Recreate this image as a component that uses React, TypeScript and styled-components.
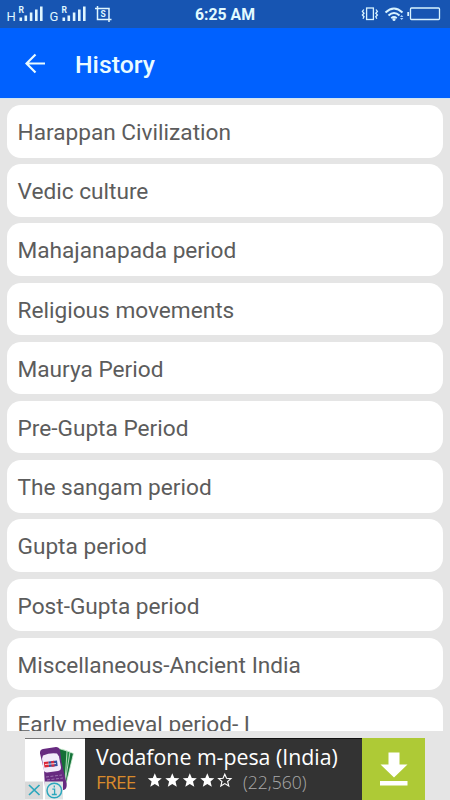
import React from 'react';
import styled, { createGlobalStyle } from 'styled-components';

const GlobalStyle = createGlobalStyle`
  * { box-sizing: border-box; }
  body { margin: 0; background: #e5e5e5; overflow: hidden; }
`;

const Screen = styled.div`
  width: 450px;
  height: 800px;
  display: flex;
  flex-direction: column;
  overflow: hidden;
  background: #e5e5e5;
  font-family: Roboto, 'Liberation Sans', sans-serif;
`;

const StatusBar = styled.header`
  height: 28px;
  flex: none;
  display: grid;
  grid-template-columns: 150px 150px 150px;
  background: #1755b2;
`;

const StatusIcons = styled.svg`
  display: block;
  width: 150px;
  height: 28px;
`;

const Clock = styled.div`
  text-align: center;
  color: #e2fbff;
  font-size: 15.8px;
  line-height: 30px;
  font-weight: 700;
`;

const AppBar = styled.div`
  height: 70px;
  flex: none;
  display: flex;
  align-items: center;
  padding: 1px 0 0 25px;
  background: #0061ff;
  color: #e9fbff;
`;

const BackButton = styled.button`
  width: 50px;
  height: 24px;
  padding: 0;
  border: 0;
  background: none;
  display: flex;
  align-items: center;
`;

const Title = styled.h1`
  margin: 0;
  padding-top: 2px;
  font-size: 24.8px;
  line-height: 30px;
  font-weight: 500;
`;

const TopicList = styled.ul`
  height: 633px;
  flex: none;
  margin: 0;
  padding: 6px 7px 0;
  display: flex;
  flex-direction: column;
  gap: 6.7px;
  list-style: none;
  overflow: hidden;
  border-top: 1px solid #cfe6f4;
`;

const Topic = styled.li`
  height: 52.5px;
  flex: none;
  padding: 0 11px 0 10.5px;
  border-radius: 14px;
  background: #fff;
  color: #5c5c5c;
  font-size: 22.65px;
  line-height: 55px;
  white-space: nowrap;
`;

const AdSlot = styled.footer`
  flex: 1;
  display: flex;
  padding: 7px 25px 0;
`;

const AdThumb = styled.div`
  width: 60px;
  height: 62px;
  border-top: 1.5px solid #777;
  background: #fff;
`;

const AdBody = styled.div`
  width: 277px;
  height: 62px;
  padding: 4px 0 0 11px;
  background: #333;
  border-top: 1px solid #111;
  font-family: 'Open Sans', 'Noto Sans', sans-serif;
`;

const AdTitle = styled.div`
  color: #fff;
  font-size: 21.3px;
  line-height: 28px;
  white-space: nowrap;
`;

const AdMeta = styled.div`
  display: flex;
  align-items: center;
  height: 22px;
`;

const Price = styled.span`
  width: 50px;
  color: #d88a2c;
  font-size: 19px;
  letter-spacing: -0.8px;
  line-height: 22px;
`;

const Stars = styled.svg`
  width: 90px;
  height: 20px;
  margin-top: -5px;
`;

const Reviews = styled.span`
  margin-left: 7px;
  color: #aaa;
  font-size: 17.6px;
  font-weight: 300;
  line-height: 22px;
`;

const Download = styled.button`
  width: 63px;
  height: 62px;
  padding: 0;
  border: 0;
  background: #aeca36;
  display: block;
`;

const topics = [
  'Harappan Civilization',
  'Vedic culture',
  'Mahajanapada period',
  'Religious movements',
  'Maurya Period',
  'Pre-Gupta Period',
  'The sangam period',
  'Gupta period',
  'Post-Gupta period',
  'Miscellaneous-Ancient India',
  'Early medieval period- I',
];

const STAR = 'M0-7.2 2-2.500 7-2.200 3.200 1.100 4.500 6.200 0 3.500-4.500 6.200-3.200 1.100-7-2.200-2-2.500Z';

function Signal({ x, label }: { x: number; label: string }) {
  return (
    <g transform={`translate(${x} 0)`} fill="#dff6ff">
      <text x="0" y="21" fontSize="13">{label}</text>
      <text x="12" y="13" fontSize="8.5" fontWeight="700">R</text>
      <path d="M13 17.5h2.6V21H13zM18 15.500h2.600V21H18zM23.300 12.500h2.600V21h-2.600zM28.500 9.500h2.600V21h-2.600zM33.500 6.500h2.600V21h-2.600z" />
    </g>
  );
}

function PhoneArt() {
  return (
    <svg width="60" height="60.5" viewBox="25 739.5 60 60.5" display="block">
      <g stroke="#d9f2dc" strokeWidth=".8">
        <path d="m66 751 7.500 3-7.500 31-8-2Z" fill="#15733a" />
        <path d="m62 749.500 8 3-5 31-8-2Z" fill="#229347" />
        <path d="m59 749 8 2.500-2 31-9-2Z" fill="#146f36" />
      </g>
      <path d="M40 754q-.5-3.500 3-4.500l13-2q3 0 4 3l1.500 12 5 21q1 6-3 7l-15 2q-3 0-3.500-5l-1-17Z" fill="#672a80" />
      <path d="m42 759 1-3q7-3 14-2l2 3 2 11q0 3-3 3.500l-11 1.500q-3 0-3.500-3Z" fill="#f2eafa" />
      <path d="m43.800 762.500 4.700-.5.500 5.500-4.500.500Z" fill="#dc2637" />
      <path d="m48.500 762 8.500-1 .7 5.500-8.700 1Z" fill="#3150a1" />
      <path d="m51 761.700 3-.4.600 5.600-3 .4Z" fill="#d12d43" />
      <path d="m45 765 11-1" stroke="#fff" strokeWidth=".8" />
      <path d="m46 777.500 16-2M47 780.500l16-2" stroke="#a886bb" strokeWidth=".8" strokeDasharray="3 1.500" />
      <path d="M25 782h18v18H25z" fill="#d9d9d9" />
      <path d="M45 782h18v18H45z" fill="#dfe4e5" />
      <path d="m29 785.500 10.500 10m0-10-10.500 10" stroke="#2ba7bd" strokeWidth="1.700" />
      <circle cx="54.300" cy="791" r="7.300" fill="none" stroke="#2ba7bd" strokeWidth="1.500" />
      <path d="M54.300 786v2M52.300 789.700h2.300v5.300M51.800 795h5" fill="none" stroke="#2ba7bd" strokeWidth="1.300" />
    </svg>
  );
}

export default function App() {
  return (
    <Screen>
      <GlobalStyle />
      <StatusBar>
        <StatusIcons viewBox="0 0 150 28">
          <Signal x={6.5} label="H" />
          <Signal x={49.5} label="G" />
          <g fill="none" stroke="#dff6ff" strokeWidth="1.500">
            <path d="M95 8.500h14V22M97.500 6v13.500h14" />
          </g>
          <text x="100.600" y="17" fontSize="8.500" fontWeight="700" fill="#dff6ff">S</text>
        </StatusIcons>
        <Clock>6:25 AM</Clock>
        <StatusIcons viewBox="300 0 150 28">
          <g fill="none" stroke="#d8f3ff" strokeWidth="1.300">
            <rect x="366.600" y="8" width="6.800" height="11.500" />
            <path d="m363.800 9.500-1.400 2 1.600 1.700-1.600 1.800 1.600 1.700-1 2M376 9.500l1.400 2-1.600 1.700 1.600 1.800-1.600 1.700 1 2" />
            <rect x="410.500" y="8" width="29" height="11.500" rx="1" />
            <path d="M408.200 12v4" strokeWidth="1.800" />
          </g>
          <g fill="none" stroke="#d8f3ff" strokeWidth="2">
            <path d="M385.500 12.500q8.500-8 17 0M388.500 15.500q5.500-5 11 0M391.300 18.200q2.700-2.400 5.400 0" />
          </g>
          <circle cx="394" cy="19.500" r="1.500" fill="#d8f3ff" />
          <path d="m400 17 1.700-2 1.700 2ZM400 18l1.700 2 1.700-2Z" fill="#a9d4ff" />
        </StatusIcons>
      </StatusBar>
      <AppBar>
        <BackButton aria-label="Back">
          <svg width="22" height="22" viewBox="0 0 22 22">
            <path d="M20 10.500H2M10.500 1.500l-9 9 9 9" fill="none" stroke="#e9fbff" strokeWidth="2.200" />
          </svg>
        </BackButton>
        <Title>History</Title>
      </AppBar>
      <TopicList>
        {topics.map((topic) => (
          <Topic key={topic}>{topic}</Topic>
        ))}
      </TopicList>
      <AdSlot>
        <AdThumb>
          <PhoneArt />
        </AdThumb>
        <AdBody>
          <AdTitle>Vodafone m-pesa (India)</AdTitle>
          <AdMeta>
            <Price>FREE</Price>
            <Stars viewBox="0 0 90 20">
              {[0, 1, 2, 3, 4].map((n) => (
                <path
                  key={n}
                  d={STAR}
                  transform={`translate(${8.8 + n * 17.5} 10.5)${n === 4 ? ' scale(.88)' : ''}`}
                  fill={n === 4 ? 'none' : '#fff'}
                  stroke={n === 4 ? '#fff' : 'none'}
                  strokeWidth="1.300"
                />
              ))}
            </Stars>
            <Reviews>(22,560)</Reviews>
          </AdMeta>
        </AdBody>
        <Download aria-label="Download">
          <svg width="63" height="62" viewBox="0 0 63 62">
            <path d="M26.500 14.500h11v12h8L32 39.500 18.500 26.500h8ZM18 43h27.500v4.500H18z" fill="#fff" />
          </svg>
        </Download>
      </AdSlot>
    </Screen>
  );
}
